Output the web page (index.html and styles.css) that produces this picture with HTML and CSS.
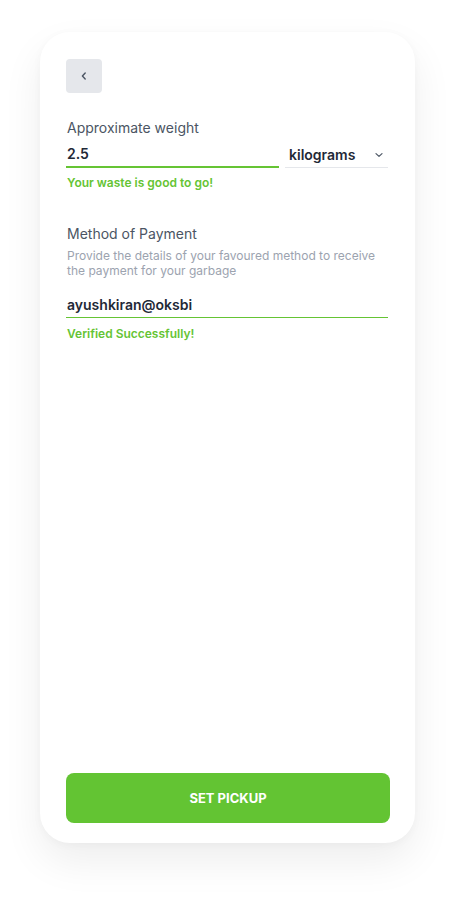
FILE: index.html
```html
<!DOCTYPE html>
<html>
<head>
<meta charset="utf-8">
<link rel="stylesheet" href="styles.css">
</head>
<body>
<div class="card">
  <button class="back" aria-label="Back">
    <svg width="10" height="10" viewBox="0 0 10 10"><path d="M6.2 2 L3.4 5 L6.2 8" fill="none" stroke="#4b5563" stroke-width="1.4" stroke-linecap="round" stroke-linejoin="round"/></svg>
  </button>

  <div class="section weight">
    <div class="label">Approximate weight</div>
    <div class="row">
      <div class="field field-main"><span class="value">2.5</span></div>
      <div class="field field-select">
        <span class="value">kilograms</span>
        <svg width="10" height="10" viewBox="0 0 10 10"><path d="M2 3.6 L5 6.4 L8 3.6" fill="none" stroke="#4b5563" stroke-width="1.2" stroke-linecap="round" stroke-linejoin="round"/></svg>
      </div>
    </div>
    <div class="ok">Your waste is good to go!</div>
  </div>

  <div class="section payment">
    <div class="label">Method of Payment</div>
    <div class="desc">Provide the details of your favoured method to receive the payment for your garbage</div>
    <div class="field field-full"><span class="value">ayushkiran@oksbi</span></div>
    <div class="ok ok-last">Verified Successfully!</div>
  </div>

  <button class="submit">SET PICKUP</button>
</div>
</body>
</html>
```

FILE: styles.css
```css
* { box-sizing: border-box; }
html, body { margin: 0; padding: 0; background: #ffffff; }
body {
  font-family: Inter, "Noto Sans", sans-serif;
  width: 471px;
  height: 908px;
  overflow: hidden;
}
.card {
  margin: 32px 0 0 40px;
  width: 375px;
  height: 811px;
  background: #fff;
  border-radius: 30px;
  box-shadow: 0 18px 40px rgba(0,0,0,0.07), 0 2px 10px rgba(0,0,0,0.03);
  padding: 27px 25px 20px 26px;
  display: flex;
  flex-direction: column;
}
.back {
  width: 36px;
  height: 34px;
  border: none;
  border-radius: 4px;
  background: #e5e7eb;
  display: flex;
  align-items: center;
  justify-content: center;
  padding: 0;
  margin: 0;
}
.section { display: flex; flex-direction: column; }
.weight { margin-top: 26px; }
.payment { margin-top: 35px; }
.label {
  font-size: 14px;
  line-height: 18px;
  color: #4b5563;
  padding-left: 1px;
}
.row { display: flex; gap: 6px; margin-top: 6px; }
.field {
  display: flex;
  align-items: center;
  height: 25px;
  padding-left: 1px;
  padding-bottom: 2px;
}
.field .value {
  font-size: 14px;
  font-weight: 600;
  color: #1f2937;
}
.field-main {
  width: 213px;
  border-bottom: 2px solid #65c434;
}
.field-select {
  width: 103px;
  border-bottom: 1px solid #e5e7eb;
  justify-content: space-between;
  padding: 0 4px 1px 4px;
}
.field-select svg { margin-top: 1px; }
.field-full {
  width: 322px;
  border-bottom: 1px solid #65c434;
  margin-top: 15px;
}
.desc {
  font-size: 12px;
  line-height: 15px;
  color: #9ca3af;
  margin-top: 5px;
  padding-left: 1px;
}
.ok {
  font-size: 12px;
  font-weight: 600;
  color: #65c434;
  margin-top: 7px;
  padding-left: 1px;
}
.ok-last { margin-top: 8px; }
.submit {
  margin-top: auto;
  width: 324px;
  height: 50px;
  border: none;
  border-radius: 8px;
  background: #63c433;
  color: #ffffff;
  font-family: Inter, "Noto Sans", sans-serif;
  font-size: 13px;
  font-weight: 700;
  letter-spacing: 0;
}
```
